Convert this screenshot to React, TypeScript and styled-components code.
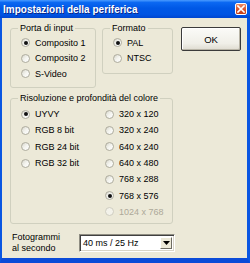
import React from 'react';
import styled, { createGlobalStyle } from 'styled-components';

const GlobalStyle = createGlobalStyle`
  html, body {
    margin: 0;
    padding: 0;
  }
  body {
    font-family: "Liberation Sans", Arial, sans-serif;
    font-size: 9px;
    color: #000;
  }
`;

type Option = { label: string; checked?: boolean; disabled?: boolean };

const inputs: Option[] = [
  { label: 'Composito 1', checked: true },
  { label: 'Composito 2' },
  { label: 'S-Video' },
];

const formats: Option[] = [{ label: 'PAL', checked: true }, { label: 'NTSC' }];

const depths: Option[] = [
  { label: 'UYVY', checked: true },
  { label: 'RGB 8 bit' },
  { label: 'RGB 24 bit' },
  { label: 'RGB 32 bit' },
];

const sizes: Option[] = [
  { label: '320 x 120' },
  { label: '320 x 240' },
  { label: '640 x 240' },
  { label: '640 x 480' },
  { label: '768 x 288' },
  { label: '768 x 576', checked: true },
  { label: '1024 x 768', disabled: true },
];

const RadioList: React.FC<{ items: Option[]; rowHeight: number }> = ({
  items,
  rowHeight,
}) => (
  <List>
    {items.map((item) => (
      <RadioRow key={item.label} $h={rowHeight} $disabled={item.disabled}>
        <Circle $disabled={item.disabled}>{item.checked && <Dot />}</Circle>
        <span>{item.label}</span>
      </RadioRow>
    ))}
  </List>
);

const App: React.FC = () => {
  return (
    <>
      <GlobalStyle />
      <Window>
        <TitleBar>
          <Title>Impostazioni della periferica</Title>
          <CloseButton>
            <svg width="8" height="8" viewBox="0 0 8 8">
              <path
                d="M1 1 L7 7 M7 1 L1 7"
                stroke="#fff"
                strokeWidth="1.6"
                strokeLinecap="square"
              />
            </svg>
          </CloseButton>
        </TitleBar>
        <Frame>
          <TopRow>
            <GroupBox $w={86} $h={66}>
              <Legend>Porta di input</Legend>
              <Padded $top={1}>
                <RadioList items={inputs} rowHeight={15.5} />
              </Padded>
            </GroupBox>
            <GroupBox $w={71} $h={52} $ml={6}>
              <Legend>Formato</Legend>
              <Padded $top={1}>
                <RadioList items={formats} rowHeight={15.5} />
              </Padded>
            </GroupBox>
            <OkButton>OK</OkButton>
          </TopRow>
          <GroupBox $w={163} $h={132} $mt={4}>
            <Legend>Risoluzione e profondità del colore</Legend>
            <Columns>
              <RadioList items={depths} rowHeight={16.3} />
              <RadioList items={sizes} rowHeight={16.3} />
            </Columns>
          </GroupBox>
          <BottomRow>
            <FieldLabel>
              Fotogrammi
              <br />
              al secondo
            </FieldLabel>
            <Combo>
              <ComboText>40 ms / 25 Hz</ComboText>
              <DropButton>
                <svg width="7" height="4" viewBox="0 0 7 4">
                  <path d="M0 0 H7 L3.5 4 Z" fill="#000" />
                </svg>
              </DropButton>
            </Combo>
          </BottomRow>
        </Frame>
      </Window>
    </>
  );
};

export default App;

const Window = styled.div`
  width: 250px;
  height: 263px;
  display: flex;
  flex-direction: column;
  box-sizing: border-box;
  overflow: hidden;
`;

const TitleBar = styled.div`
  height: 18px;
  flex: none;
  display: flex;
  align-items: center;
  justify-content: space-between;
  padding: 0 3px 0 3px;
  background: linear-gradient(
    180deg,
    #4a9bff 0%,
    #0b68f2 14%,
    #0058e6 45%,
    #0054e3 80%,
    #0046cf 100%
  );
`;

const Title = styled.span`
  color: #fff;
  font-weight: bold;
  font-size: 10px;
  text-shadow: 1px 1px 0 #0b2a8a;
  white-space: nowrap;
`;

const CloseButton = styled.div`
  width: 12px;
  height: 12px;
  box-sizing: border-box;
  display: flex;
  align-items: center;
  justify-content: center;
  border: 1px solid #fff;
  border-radius: 2px;
  background: linear-gradient(180deg, #eb8a66 0%, #d9532c 55%, #c43d18 100%);
`;

const Frame = styled.div`
  flex: 1;
  display: flex;
  flex-direction: column;
  align-items: flex-start;
  background: #ece9d8;
  border-left: 2px solid #0a56e2;
  border-right: 3px solid #0a56e2;
  border-bottom: 5px solid #0b4bd8;
  padding: 4px 0 0 8px;
  box-sizing: border-box;
`;

const TopRow = styled.div`
  display: flex;
  align-items: flex-start;
`;

const GroupBox = styled.fieldset<{ $w: number; $h: number; $ml?: number; $mt?: number }>`
  width: ${(p) => p.$w}px;
  height: ${(p) => p.$h}px;
  margin: ${(p) => p.$mt ?? 0}px 0 0 ${(p) => p.$ml ?? 0}px;
  padding: 0;
  min-width: 0;
  box-sizing: border-box;
  border: 1px solid #d0d0bf;
  border-radius: 3px;
`;

const Legend = styled.legend`
  margin-left: 7px;
  padding: 0 2px;
  line-height: 12px;
  font-size: 9px;
  color: #000;
  white-space: nowrap;
`;

const Padded = styled.div<{ $top: number }>`
  padding-top: ${(p) => p.$top}px;
`;

const Columns = styled.div`
  display: grid;
  grid-template-columns: 84px 1fr;
  padding-top: 2px;
`;

const List = styled.div`
  display: flex;
  flex-direction: column;
`;

const RadioRow = styled.div<{ $h: number; $disabled?: boolean }>`
  height: ${(p) => p.$h}px;
  display: flex;
  align-items: center;
  gap: 5px;
  padding-left: 10px;
  color: ${(p) => (p.$disabled ? '#aca899' : '#000')};
  white-space: nowrap;
`;

const Circle = styled.span<{ $disabled?: boolean }>`
  width: 9px;
  height: 9px;
  flex: none;
  box-sizing: border-box;
  border-radius: 50%;
  border: 1px solid ${(p) => (p.$disabled ? '#cfcdc0' : '#aeac9e')};
  background: ${(p) =>
    p.$disabled
      ? '#f3f2ea'
      : 'linear-gradient(135deg, #d8d7cc 0%, #f4f4ef 50%, #ffffff 100%)'};
  display: flex;
  align-items: center;
  justify-content: center;
`;

const Dot = styled.span`
  width: 4px;
  height: 4px;
  border-radius: 50%;
  background: #111;
`;

const OkButton = styled.div`
  width: 60px;
  height: 24px;
  margin: 5px 0 0 8px;
  box-sizing: border-box;
  display: flex;
  align-items: center;
  justify-content: center;
  font-size: 9.5px;
  border: 1px solid #3b3b3b;
  border-radius: 2px;
  background: linear-gradient(180deg, #fbfbf8 0%, #f0efe8 70%, #dedbd0 100%);
  box-shadow: inset -1px -1px 0 #b8b4a6, inset 1px 1px 0 #ffffff;
`;

const BottomRow = styled.div`
  display: flex;
  align-items: center;
  margin-top: 8px;
  padding-left: 2px;
`;

const FieldLabel = styled.div`
  width: 67px;
  line-height: 11px;
`;

const Combo = styled.div`
  width: 96px;
  height: 18px;
  box-sizing: border-box;
  display: flex;
  align-items: stretch;
  background: #fff;
  border: 1px solid;
  border-color: #8f8d82 #ffffff #ffffff #8f8d82;
  box-shadow: inset 1px 1px 0 #404040, inset -1px -1px 0 #d8d4c8;
  padding: 2px 2px 2px 3px;
`;

const ComboText = styled.span`
  flex: 1;
  display: flex;
  align-items: center;
  font-size: 9px;
`;

const DropButton = styled.div`
  width: 12px;
  box-sizing: border-box;
  display: flex;
  align-items: center;
  justify-content: center;
  background: #ece9d8;
  border: 1px solid;
  border-color: #ffffff #6f6d64 #6f6d64 #ffffff;
`;
